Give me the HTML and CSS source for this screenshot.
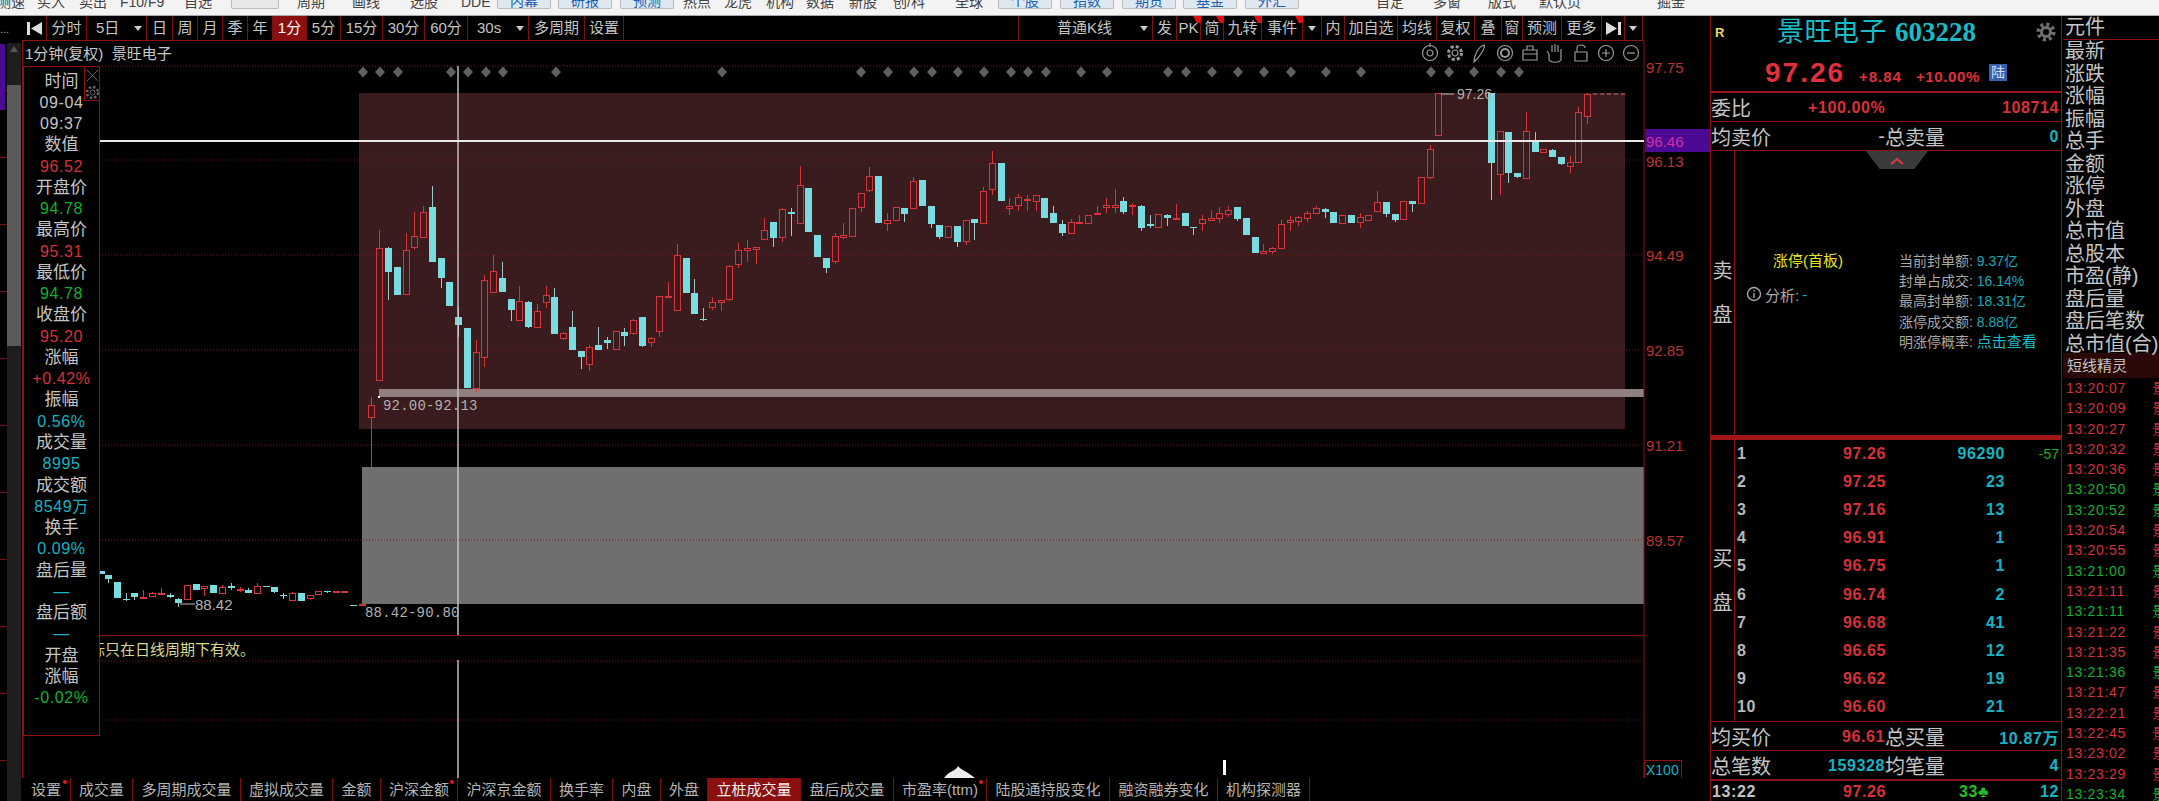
FILE: index.html
```html
<!DOCTYPE html>
<html lang="zh-CN">
<head>
  <meta charset="UTF-8">
  <title>景旺电子 603228</title>
  <link rel="stylesheet" href="styles.css">
</head>
<body>

  <!-- 顶部菜单 (被窗口裁切) -->
  <div class="menu-bar">
    <div class="menu-grid">
      <span>测速</span><span>买入</span><span>卖出</span><span>F10/F9</span><span>自选</span>
      <span class="menu-btn blank"></span>
      <span>周期</span><span>画线</span><span>选股</span><span>DDE</span>
      <span class="menu-btn">内幕</span><span class="menu-btn">研报</span><span class="menu-btn">预测</span>
      <span>热点</span><span>龙虎</span><span>机构</span><span>数据</span><span>新股</span><span>创/科</span><span>全球</span>
      <span class="menu-btn">个股</span><span class="menu-btn">指数</span><span class="menu-btn">期货</span><span class="menu-btn">基金</span><span class="menu-btn">外汇</span>
      <span>自定</span><span>多窗</span><span>版式</span><span>默认页</span><span>掘金</span>
    </div>
  </div>

  <div class="main">
    <div class="left-strip">
      <div class="strip-marks"><b>...</b><i></i></div>
      <div class="scrollbar"><u></u><s></s></div>
    </div>

    <div class="chart-col">
      <div class="period-bar">
        <span class="jump">
          <svg width="17" height="15" viewBox="0 0 17 15"><rect x="1" y="1" width="3" height="13"/><path d="M16 1V14L5 7.5Z"/></svg>
        </span>
        <span>分时</span>
        <span class="drop">5日</span>
        <span>日</span><span>周</span><span>月</span><span>季</span><span>年</span>
        <span class="on">1分</span>
        <span>5分</span><span>15分</span><span>30分</span><span>60分</span>
        <span class="drop">30s</span>
        <span>多周期</span><span>设置</span>
        <span class="gap"></span>
        <span class="drop k-type">普通K线</span>
        <span>发</span><span class="mark">PK</span><span class="mark">简</span><span class="mark">九转</span><span class="mark">事件</span>
        <span class="drop only"></span>
        <span>内</span><span>加自选</span><span>均线</span><span>复权</span><span>叠</span><span>窗</span><span>预测</span><span>更多</span>
        <span class="jump">
          <svg width="17" height="15" viewBox="0 0 17 15"><path d="M1 1V14L12 7.5Z"/><rect x="13" y="1" width="3" height="13"/></svg>
        </span>
        <span class="drop only"></span>
      </div>

      <div class="chart-wrap">
        <!-- 画布坐标就是页面坐标 -->
        <svg class="chart" width="1688" height="737" viewBox="22 41 1688 737">
          <rect x="359" y="93" width="1266" height="336" fill="#3b1c1e"/>
          <rect x="362" y="467" width="1282" height="137" fill="#6f6f6f"/>
          <rect x="379" y="389" width="1265" height="8" fill="#8f7f7f"/>

          <g class="grid">
            <line x1="99" x2="1644" y1="66" y2="66"/>
            <line x1="99" x2="1644" y1="160" y2="160"/>
            <line x1="99" x2="1644" y1="255" y2="255"/>
            <line x1="99" x2="1644" y1="350" y2="350"/>
            <line x1="99" x2="1644" y1="445" y2="445"/>
            <line x1="99" x2="1644" y1="540" y2="540"/>
            <line x1="99" x2="1644" y1="661" y2="661"/>
            <line x1="99" x2="1644" y1="720" y2="720"/>
          </g>

          <g id="diamonds"></g>
          <g id="candles"></g>

          <g class="frame">
            <line x1="22.5" x2="22.5" y1="41" y2="778" stroke-width="2"/>
            <line x1="1644" x2="1644" y1="41" y2="778"/>
            <line x1="23" x2="1644" y1="635.5" y2="635.5"/>
            <rect x="1644.5" y="760.5" width="37" height="18"/>
          </g>

          <path class="cross" d="M458 66V635M458 660V778"/>
          <line class="cross-h" x1="99" x2="1644" y1="141" y2="141"/>

          <line class="limit-dash" x1="1593" x2="1625" y1="94" y2="94"/>
          <path class="note-line" d="M1441 94H1454M180 604H195"/>
          <rect x="378" y="396" width="2" height="2" fill="#fff"/>
          <text class="note" x="1457" y="94">97.26</text>
          <text class="note big" x="195" y="604">88.42</text>
          <text class="note wide" x="383" y="406">92.00-92.13</text>
          <text class="note wide" x="365" y="613">88.42-90.80</text>

          <rect x="1645" y="129" width="65" height="23" fill="#4c0a94"/>
          <g class="axis">
            <text x="1646" y="67">97.75</text>
            <text x="1646" y="141" class="hover">96.46</text>
            <text x="1646" y="161">96.13</text>
            <text x="1646" y="255">94.49</text>
            <text x="1646" y="350">92.85</text>
            <text x="1646" y="445">91.21</text>
            <text x="1646" y="540">89.57</text>
          </g>
          <text class="scale-x" x="1646" y="770">X100</text>

          <text class="hint" x="90" y="649">标只在日线周期下有效。</text>

          <path d="M944 778C950 770 955 772 958 766C961 770 968 772 975 778Z" fill="#eee"/>
          <rect x="1223" y="760" width="3" height="15" fill="#fff"/>

          <!-- 图上工具图标 -->
          <g class="tools">
            <g transform="translate(1430 53)"><circle r="7.5"/><circle r="3"/><path d="M0-10V-6"/></g>
            <g transform="translate(1455 53)"><circle r="3"/><circle r="6.5" stroke-width="3" stroke-dasharray="3 2.1"/></g>
            <g transform="translate(1479 53)"><path d="M5-8C7-6 1 3-3 7L-5 9C-5 3-1-6 5-8Z"/></g>
            <g transform="translate(1505 53)"><circle r="7.5"/><circle r="4" stroke-width="2"/></g>
            <g transform="translate(1530 53)"><path d="M-7-3H7V7H-7ZM-7 1H7M-3-3V-7H3V-3"/></g>
            <g transform="translate(1555 53)"><path d="M-6 1V7C-4 10 4 10 6 7V-4M3-1V-8M0-1V-9M-3-1V-8M-6 1L-8-2"/></g>
            <g transform="translate(1581 53)"><path d="M-6-1H6V8H-6ZM-4-1V-5C-4-9 4-9 4-5"/></g>
            <g transform="translate(1606 53)"><circle r="7.5"/><path d="M-4 0H4M0-4V4"/></g>
            <g transform="translate(1631 53)"><circle r="7.5"/><path d="M-4 0H4"/></g>
          </g>
        </svg>

        <div class="chart-title">1分钟(复权)&nbsp;&nbsp;景旺电子</div>

        <div class="data-window">
          <div class="dw-tools">
            <svg width="15" height="17" viewBox="0 0 15 17"><path d="M2 3L13 14M13 3L2 14"/></svg>
            <svg width="15" height="17" viewBox="0 0 15 17"><circle cx="7.5" cy="8.5" r="2.5"/><circle cx="7.5" cy="8.5" r="5.5" stroke-width="2.4" stroke-dasharray="2.5 1.8"/></svg>
          </div>
          <div>时间</div>
          <div class="num">09-04</div>
          <div class="num">09:37</div>
          <div>数值</div>
          <div class="num red">96.52</div>
          <div>开盘价</div>
          <div class="num green">94.78</div>
          <div>最高价</div>
          <div class="num red">95.31</div>
          <div>最低价</div>
          <div class="num green">94.78</div>
          <div>收盘价</div>
          <div class="num red">95.20</div>
          <div>涨幅</div>
          <div class="num red">+0.42%</div>
          <div>振幅</div>
          <div class="num cyan">0.56%</div>
          <div>成交量</div>
          <div class="num cyan">8995</div>
          <div>成交额</div>
          <div class="num cyan">8549万</div>
          <div>换手</div>
          <div class="num cyan">0.09%</div>
          <div>盘后量</div>
          <div class="num cyan">—</div>
          <div>盘后额</div>
          <div class="num cyan">—</div>
          <div>开盘</div>
          <div>涨幅</div>
          <div class="num green">-0.02%</div>
        </div>
      </div>

      <div class="index-tabs">
        <span class="dot">设置</span><span>成交量</span><span>多周期成交量</span><span>虚拟成交量</span><span>金额</span>
        <span class="dot">沪深金额</span><span>沪深京金额</span><span>换手率</span><span>内盘</span><span>外盘</span>
        <span class="on">立桩成交量</span><span>盘后成交量</span><span class="dot">市盈率(ttm)</span>
        <span>陆股通持股变化</span><span>融资融券变化</span><span>机构探测器</span>
      </div>
    </div>

    <div class="quote-panel">
      <div class="quote-head">
        <div class="name-row">
          <span class="r-tag">R</span>
          <span class="stock-name">景旺电子 <em>603228</em></span>
          <svg class="gear" width="20" height="20" viewBox="0 0 20 20"><circle cx="10" cy="10" r="7.5" stroke-width="4" stroke-dasharray="3 2.9"/><circle cx="10" cy="10" r="4.5" stroke-width="3"/></svg>
        </div>
        <div class="price-row">
          <span class="last-price">97.26</span>
          <span class="change">+8.84</span>
          <span class="change pct">+10.00%</span>
          <span class="lu">陆</span>
        </div>
      </div>

      <div class="stat-row">
        <span>委比</span><span class="v red pad">+100.00%</span><span></span><span class="v red right">108714</span>
      </div>
      <div class="stat-row">
        <span>均卖价</span><span class="right">-</span><span>总卖量</span><span class="v cyan right">0</span>
      </div>

      <div class="book sell">
        <div class="side-name"><span>卖</span><span>盘</span></div>
        <div class="sell-body">
          <div class="fold">
            <svg width="16" height="8" viewBox="0 0 16 8"><path d="M2 7L8 2L14 7"/></svg>
          </div>
          <div class="limit-left">
            <div class="limit-title">涨停(首板)</div>
            <div class="limit-note">
              <svg width="16" height="16" viewBox="0 0 16 16"><circle cx="8" cy="8" r="6.5"/><path d="M8 4V5.5M8 7V12"/></svg>
              分析:<span class="cyan">-</span>
            </div>
          </div>
          <div class="limit-list">
            <div>当前封单额: <span>9.37亿</span></div>
            <div>封单占成交: <span>16.14%</span></div>
            <div>最高封单额: <span>18.31亿</span></div>
            <div>涨停成交额: <span>8.88亿</span></div>
            <div>明涨停概率: <span class="link">点击查看</span></div>
          </div>
        </div>
      </div>

      <div class="book buy">
        <div class="side-name"><span>买</span><span>盘</span></div>
        <div class="bid-list">
          <div class="bid"><b>1</b><span class="red">97.26</span><span class="cyan">96290</span><i>-57</i></div>
          <div class="bid"><b>2</b><span class="red">97.25</span><span class="cyan">23</span></div>
          <div class="bid"><b>3</b><span class="red">97.16</span><span class="cyan">13</span></div>
          <div class="bid"><b>4</b><span class="red">96.91</span><span class="cyan">1</span></div>
          <div class="bid"><b>5</b><span class="red">96.75</span><span class="cyan">1</span></div>
          <div class="bid"><b>6</b><span class="red">96.74</span><span class="cyan">2</span></div>
          <div class="bid"><b>7</b><span class="red">96.68</span><span class="cyan">41</span></div>
          <div class="bid"><b>8</b><span class="red">96.65</span><span class="cyan">12</span></div>
          <div class="bid"><b>9</b><span class="red">96.62</span><span class="cyan">19</span></div>
          <div class="bid"><b>10</b><span class="red">96.60</span><span class="cyan">21</span></div>
        </div>
      </div>

      <div class="stat-row line-top">
        <span>均买价</span><span class="v red right">96.61</span><span>总买量</span><span class="v cyan right">10.87万</span>
      </div>
      <div class="stat-row">
        <span>总笔数</span><span class="v cyan right">159328</span><span>均笔量</span><span class="v cyan right">4</span>
      </div>
      <div class="last-trade">
        <span>13:22</span><span class="red">97.26</span><span class="lime">33♣</span><span class="cyan right">12</span>
      </div>
    </div>

    <div class="side-list">
      <div class="side-head">元件</div>
      <div class="side-rows">
        <div>最新</div><div>涨跌</div><div>涨幅</div><div>振幅</div><div>总手</div><div>金额</div><div>涨停</div>
        <div>外盘</div><div>总市值</div><div>总股本</div><div>市盈(静)</div><div>盘后量</div><div>盘后笔数</div><div>总市值(合)</div>
      </div>
      <div class="ticks-head">短线精灵</div>
      <div class="ticks" id="ticks"></div>
    </div>
  </div>

  <script src="chart.js"></script>
</body>
</html>
```

FILE: styles.css
```css
* { margin: 0; padding: 0; box-sizing: border-box; }
html, body { width: 2159px; height: 801px; overflow: hidden; }
body { background: #000; color: #c4c4c4; font-family: "Liberation Sans", "Noto Sans CJK SC", sans-serif; font-size: 15px; }

.red { color: #d8303a; }
.green { color: #12b032; }
.lime { color: #20c020; }
.cyan { color: #14b4c4; }
.right { text-align: right; }

/* 顶部菜单 */
.menu-bar { height: 16px; overflow: hidden; background: #f3f3f3; border-bottom: 1px solid #a8a8a8; }
.menu-grid { display: grid; grid-template-columns: 40px 42px 41px 64px 47px 66px 55px 58px 51px 36px 61px 62px 63px 41px 42px 40px 43px 44px 62px 43px 62px 62px 61px 62px 131px 57px 55px 51px 118px 60px; margin: -5px 0 0 -3px; height: 15px; line-height: 14px; font-size: 14px; color: #444; white-space: nowrap; }
.menu-btn { width: 54px; height: 14px; background: #dfe8f0; border: 1px solid #bbb; border-top: 0; border-radius: 2px; color: #1a5fb4; text-align: center; line-height: 13px; }
.menu-btn.blank { width: 48px; background: #e8e8e8; }

.main { display: flex; height: 785px; }

/* 最左滚动条 */
.left-strip { width: 22px; display: flex; flex: none; }
.strip-marks { width: 7px; position: relative; background: repeating-linear-gradient(to bottom, #000 0, #000 66px, #7a1010 66px, #7a1010 67px) 0 8px; }
.strip-marks b { position: absolute; left: 0; top: 8px; font-weight: normal; font-size: 11px; line-height: 10px; color: #aaa; }
.strip-marks i { position: absolute; left: 0; top: 28px; width: 5px; height: 66px; background: #4c0a94; }
.scrollbar { width: 14px; margin-top: 27px; background: #1e1e1e; position: relative; }
.scrollbar u { position: absolute; top: 3px; left: 3px; border: 4px solid transparent; border-top: 0; border-bottom: 6px solid #555; }
.scrollbar s { position: absolute; top: 42px; left: 0; width: 100%; height: 261px; background: #5a5a5a; }

.chart-col { width: 1688px; flex: none; display: flex; flex-direction: column; }

/* 周期工具条 */
.period-bar { width: 1622px; height: 25px; display: grid; grid-template-columns: 25px 40px 60px 26px 25px 25px 25px 25px 34px 34px 42px 42px 43px 61px 56px 39px 395px 134px 24px 24px 23px 38px 41px 19px 23px 53px 39px 38px 27px 21px 39px 40px 23px 18px; border-bottom: 1px solid #8e1212; line-height: 24px; white-space: nowrap; }
.period-bar span { position: relative; border-right: 1px solid #7a1010; text-align: center; overflow: hidden; }
.period-bar span.on { background: #8a0f0f; color: #fff; }
.period-bar .jump { display: flex; align-items: center; justify-content: center; }
.jump svg { fill: #ddd; }
.period-bar .drop { text-align: left; padding-left: 9px; }
.drop::after { content: ""; position: absolute; right: 4px; top: 10px; border: 4px solid transparent; border-bottom: 0; border-top: 5px solid #ccc; }
.period-bar .k-type { padding-left: 38px; }
.drop.only::after { right: 5px; }
.period-bar .mark { overflow: visible; }
.mark::after { content: ""; position: absolute; right: -1px; top: 0; border: 4px solid transparent; border-top: 7px solid #e01010; border-right-color: #e01010; border-bottom: 0; }

/* K线画布 */
.chart-wrap { position: relative; width: 1688px; height: 737px; }
.chart { position: absolute; left: 0; top: 0; display: block; }
.grid line { stroke: #7c1616; stroke-dasharray: 1 2; }
.frame line, .frame rect { stroke: #8e1212; fill: none; }
.cross { stroke: #c8c8c8; stroke-width: 1.4; fill: none; }
.cross-h { stroke: #e8e8e8; stroke-width: 2; }
.limit-dash { stroke: #a85050; stroke-dasharray: 4 3; stroke-width: 1.5; }
.note-line { stroke: #bbb; fill: none; }
.note { fill: #b4b0b0; font-size: 14px; dominant-baseline: central; }
.note.big { font-size: 15px; }
.note.wide { font-size: 14px; font-family: "Liberation Mono", monospace; letter-spacing: .2px; }
.axis text { fill: #b83434; font-size: 15px; dominant-baseline: central; }
.axis .hover { fill: #d22ea8; }
.scale-x { fill: #14b4c4; font-size: 14px; dominant-baseline: central; }
.hint { fill: #d8d890; font-size: 15px; dominant-baseline: central; }
.tools { fill: none; stroke: #9a9a9a; stroke-width: 1.2; }

.chart-title { position: absolute; left: 3px; top: 3px; line-height: 20px; color: #c8c8c8; white-space: nowrap; }

/* 十字光标数据窗 */
.data-window { position: absolute; left: 1px; top: 25px; width: 77px; height: 670px; padding-top: 3.5px; background: #000; border: 1px solid #8e1212; text-align: center; font-size: 17px; }
.data-window > div { height: 21.28px; line-height: 21px; white-space: nowrap; }
.data-window .num { font-size: 16px; letter-spacing: .6px; }
.data-window > .dw-tools { position: absolute; right: -1px; top: -1px; width: 16px; height: 35px; border: 1px solid #8e1212; }
.dw-tools svg { display: block; fill: none; stroke: #666; stroke-width: 1; }

/* 指标标签 */
.index-tabs { width: 1622px; height: 23px; display: grid; grid-template-columns: 49px 62px 108px 92px 48px 77px 93px 62px 48px 47px 93px 93px 93px 123px 108px 92px; line-height: 24px; color: #b4b4b4; white-space: nowrap; }
.index-tabs span { position: relative; text-align: center; border-right: 1px solid #7a1010; }
.index-tabs .on { background: #8a0f0f; color: #eee; }
.dot::after { content: ""; position: absolute; right: 3px; top: 2px; width: 4px; height: 4px; border-radius: 50%; background: #e01818; }

/* 盘口 */
.quote-panel { width: 352px; flex: none; border-left: 1px solid #8e1212; border-right: 1px solid #8e1212; display: flex; flex-direction: column; }
.quote-head { height: 77px; border-bottom: 2px solid #a01616; }
.name-row { height: 39px; position: relative; padding-left: 66px; }
.r-tag { position: absolute; left: 4px; top: 9px; color: #e6d86a; font-weight: bold; font-size: 13px; }
.stock-name { font-size: 27px; line-height: 33px; color: #18bcc8; letter-spacing: .5px; white-space: nowrap; }
.stock-name em { font-family: "Liberation Serif", serif; font-style: normal; font-weight: bold; font-size: 27px; letter-spacing: 0; }
.gear { position: absolute; right: 5px; top: 6px; fill: none; stroke: #6e6e6e; }
.price-row { height: 36px; display: flex; align-items: center; padding-left: 54px; color: #e0303c; }
.last-price { font-size: 28px; font-weight: bold; letter-spacing: 2px; width: 94px; }
.change { font-size: 15px; font-weight: bold; letter-spacing: 1px; padding-top: 6px; width: 57px; }
.change.pct { width: 73px; letter-spacing: .6px; }
.lu { width: 18px; height: 17px; margin-bottom: 2px; background: #3a5fb0; color: #cfe0f4; font-size: 14px; line-height: 17px; text-align: center; }

.stat-row { height: 29px; flex: none; display: grid; grid-template-columns: 70px 104px 60px 1fr; align-items: center; padding-right: 2px; border-bottom: 1px solid #8e1212; font-size: 20px; white-space: nowrap; }
.stat-row .v { font-size: 16px; font-weight: bold; letter-spacing: .6px; }
.stat-row .pad { padding-left: 27px; }
.stat-row.line-top { border-top: 1px solid #8e1212; height: 30px; }

.book { display: flex; }
.book.sell { border-bottom: 5px solid #a01616; height: 289px; flex: none; }
.book.buy { height: 281px; flex: none; }
.side-name { width: 24px; flex: none; border-right: 1px solid #8e1212; display: flex; flex-direction: column; justify-content: center; align-items: center; gap: 18px; font-size: 20px; line-height: 26px; }

.sell-body { flex: 1; display: flex; position: relative; padding-top: 100px; }
.fold { position: absolute; left: 131px; top: 0; width: 62px; height: 18px; background: #3a3a3a; clip-path: polygon(0 0, 100% 0, 78% 100%, 22% 100%); text-align: center; }
.fold svg { display: block; margin: 6px auto 0; fill: none; stroke: #d84040; stroke-width: 2; }
.limit-left { width: 164px; padding-left: 11px; }
.limit-title { height: 20px; line-height: 20px; margin-left: 27px; color: #e4e41c; }
.limit-note { display: flex; align-items: center; gap: 3px; margin-top: 13px; height: 20px; color: #aaa; font-size: 15px; }
.limit-note svg { fill: none; stroke: #aaa; stroke-width: 1.4; }
.limit-list { font-size: 14px; color: #a8a8a8; white-space: nowrap; }
.limit-list div { height: 20.2px; line-height: 20px; }
.limit-list span { color: #14a8b8; }
.limit-list .link { font-size: 15px; color: #18bcc8; }

.bid-list { flex: 1; }
.bid { height: 28.1px; display: grid; grid-template-columns: 106px 60px 102px 1fr; align-items: center; padding: 0 2px; font-weight: bold; font-size: 16px; letter-spacing: .6px; }
.bid b { color: #b8b8b8; }
.bid span:last-of-type { text-align: right; }
.bid span:first-of-type { text-align: left; }
.bid i { font-style: normal; font-weight: normal; color: #20b020; font-size: 14px; text-align: right; letter-spacing: 0; }

.last-trade { flex: 1; display: grid; grid-template-columns: 131px 116px 1fr 40px; align-items: center; padding: 2px 2px 0 1px; border-top: 1px solid #8e1212; font-size: 16px; font-weight: bold; letter-spacing: .6px; overflow: hidden; }

/* 右侧列表 */
.side-list { flex: 1; min-width: 0; overflow: hidden; padding-left: 1px; }
.side-head { height: 24px; border-bottom: 1px solid #8e1212; font-size: 20px; line-height: 23px; padding-left: 2px; }
.side-rows { height: 313px; padding-left: 2px; font-size: 20px; white-space: nowrap; }
.side-rows div { height: 22.5px; line-height: 22px; }
.ticks-head { height: 25px; background: #2a0808; padding-left: 4px; line-height: 25px; }
.ticks { height: 423px; overflow: hidden; }
.tick { height: 20.3px; line-height: 20px; display: flex; justify-content: space-between; font-size: 14px; letter-spacing: .7px; padding-left: 3px; width: 104px; white-space: nowrap; }
```

FILE: chart.js
```js
// 菱形标记的 x 坐标
const DIAMONDS = [363, 380, 398, 451, 468, 486, 503, 556, 722, 861, 888, 914, 932, 958, 984, 1011, 1028, 1046, 1081, 1107, 1168, 1186, 1212, 1238, 1264, 1291, 1326, 1361, 1431, 1449, 1474, 1501, 1519];

// 每根K线: 中心x, 最高, 实体上沿, 实体下沿, 最低, 类型 (r 阳 / c 阴)
// 按三段记录, x0/sx/y0/sy 把记录值换算成页面坐标
const SEGMENTS = [
  { x0: 0, sx: 2.613, y0: 300, sy: 3, rows: [
    [265,813,813,823,823,'c'], [283,824,824,838,850,'c'], [305,846,846,895,895,'c'], [328,880,897,899,903,'c'],
    [351,878,878,892,900,'c'], [374,870,892,894,895,'r'], [397,875,880,889,889,'r'], [420,865,880,883,883,'r'],
    [443,880,885,890,895,'c'], [466,893,897,908,920,'c'], [489,855,855,897,897,'r'], [512,851,851,871,871,'c'],
    [534,857,857,863,888,'r'], [557,855,855,878,878,'c'], [580,855,860,878,878,'r'], [603,850,857,864,870,'c'],
    [626,860,867,870,875,'r'], [649,865,870,879,879,'c'], [671,848,858,878,878,'r'], [694,858,858,860,860,'c'],
    [717,862,862,875,880,'c'], [740,880,884,889,897,'c'], [763,875,880,899,899,'r'], [786,880,880,902,902,'c'],
    [809,885,885,893,899,'r'], [831,873,873,882,882,'r'], [854,873,873,876,880,'c'], [877,873,873,875,875,'r'],
    [900,873,873,875,875,'r'], [923,915,915,917,917,'c'], [946,913,913,915,915,'r']
  ] },
  { x0: 350, sx: 3, y0: 80, sy: 3, rows: [
    [62,950,975,1010,1160,'r'], [88,450,503,900,900,'r'], [114,500,503,575,660,'c'], [140,560,562,646,646,'c'],
    [167,458,510,642,642,'r'], [193,397,468,500,510,'r'], [219,378,397,470,470,'r'], [245,317,380,545,545,'c'],
    [272,535,535,594,625,'c'], [298,605,607,677,677,'c'], [324,680,712,734,770,'c'], [350,745,745,925,925,'c'],
    [377,780,817,923,935,'r'], [403,585,600,832,862,'r'], [429,525,573,636,636,'r'], [456,545,595,636,636,'c'],
    [482,658,658,691,722,'c'], [508,618,664,721,721,'r'], [534,663,665,742,745,'c'], [561,672,693,740,740,'r'],
    [587,618,645,665,685,'r'], [613,625,652,763,763,'c'], [640,755,760,774,780,'r'], [666,692,742,811,811,'c'],
    [692,812,812,830,868,'c'], [718,795,802,851,873,'r'], [745,740,795,811,811,'c'], [771,772,780,790,808,'c'],
    [797,752,754,808,808,'r'], [823,745,756,767,797,'c'], [849,718,720,760,765,'r'], [876,712,712,798,800,'c'],
    [902,770,775,787,802,'r'], [928,648,649,754,772,'r'], [955,605,648,651,651,'r'], [981,493,525,691,691,'r'],
    [1007,533,535,639,639,'c'], [1033,598,640,703,703,'c'], [1060,685,716,720,722,'c'], [1086,652,667,682,690,'r'],
    [1112,660,661,667,692,'r'], [1138,555,558,658,662,'r'], [1165,490,510,553,565,'r'], [1191,480,505,510,547,'r'],
    [1217,502,502,506,552,'r'], [1243,415,450,478,478,'r'], [1270,427,427,474,500,'c'], [1296,385,386,470,485,'r'],
    [1323,385,397,402,468,'c'], [1349,258,315,429,429,'r'], [1375,325,325,455,455,'c'], [1401,464,464,530,530,'c'],
    [1428,535,535,565,580,'c'], [1454,458,468,542,552,'r'], [1480,430,466,470,478,'r']
  ] },
  { x0: 850, sx: 3, y0: 80, sy: 3, rows: [
    [6,385,385,467,467,'r'], [32,340,340,382,395,'r'], [58,262,289,329,335,'r'], [85,288,288,429,429,'c'],
    [111,400,420,430,452,'r'], [137,382,382,419,420,'r'], [163,385,385,403,427,'c'], [190,292,303,384,384,'r'],
    [216,299,299,377,377,'c'], [242,377,377,432,445,'c'], [268,434,434,471,476,'c'], [295,438,438,471,475,'r'],
    [321,438,438,486,500,'c'], [347,420,420,482,495,'r'], [373,418,418,430,480,'c'], [400,322,333,430,430,'r'],
    [426,212,250,327,345,'r'], [452,250,250,362,362,'c'], [478,355,378,384,405,'r'], [505,342,352,376,392,'r'],
    [531,345,358,360,392,'r'], [557,344,344,362,392,'r'], [583,355,355,414,414,'c'], [610,378,400,430,430,'c'],
    [636,420,431,460,468,'c'], [662,418,427,459,459,'r'], [688,405,425,429,429,'r'], [715,405,405,429,429,'r'],
    [741,378,398,403,405,'r'], [767,355,375,380,400,'r'], [794,328,375,382,400,'r'], [820,352,362,397,402,'c'],
    [846,370,374,378,405,'r'], [873,375,377,445,452,'c'], [899,405,432,437,445,'c'], [925,402,403,441,441,'r'],
    [951,403,404,414,437,'c'], [978,373,413,418,420,'r'], [1004,400,400,437,437,'c'], [1030,440,440,444,465,'c'],
    [1056,405,418,430,452,'r'], [1082,390,415,419,420,'r'], [1108,382,400,415,430,'r'], [1135,378,389,403,412,'r'],
    [1161,381,381,418,422,'c'], [1187,415,415,464,464,'c'], [1214,472,472,520,520,'c'], [1240,493,512,519,519,'r'],
    [1266,500,503,513,522,'r'], [1292,420,431,503,503,'r'], [1319,408,420,425,452,'r'], [1345,408,410,423,437,'r'],
    [1371,392,400,415,425,'r'], [1398,378,385,399,399,'r'], [1424,385,386,395,415,'c'], [1450,397,397,430,430,'c'],
    [1476,405,405,429,429,'r'], [1503,404,404,430,430,'c']
  ] },
  { x0: 1300, sx: 3, y0: 70, sy: 3, rows: [
    [179,430,442,456,475,'r'], [205,435,435,451,451,'r'], [231,362,397,424,424,'r'], [258,397,397,432,442,'c'],
    [284,433,433,450,456,'c'], [310,393,393,448,448,'r'], [336,392,393,403,427,'c'], [362,322,322,400,402,'r'],
    [389,225,236,322,328,'r'], [415,70,70,196,196,'r'], [572,70,70,279,390,'c'], [599,183,183,313,375,'r'],
    [625,186,186,309,340,'c'], [651,308,310,322,324,'c'], [678,127,183,324,324,'r'], [704,186,210,245,245,'c'],
    [730,236,236,246,250,'r'], [756,237,240,261,261,'c'], [783,262,262,281,285,'c'], [809,258,277,287,310,'r'],
    [835,110,127,275,275,'r'], [861,70,71,139,162,'r']
  ] }
];

// 短线精灵: 时间, 是否为绿
const TICKS = [
  ['13:20:07',0], ['13:20:09',0], ['13:20:27',0], ['13:20:32',0], ['13:20:36',0], ['13:20:50',1], ['13:20:52',1],
  ['13:20:54',0], ['13:20:55',0], ['13:21:00',1], ['13:21:11',0], ['13:21:11',1], ['13:21:22',0], ['13:21:35',0],
  ['13:21:36',1], ['13:21:47',0], ['13:22:21',0], ['13:22:45',0], ['13:23:02',0], ['13:23:29',0], ['13:23:34',1]
];

const SVG_NS = 'http://www.w3.org/2000/svg';

function el(parent, name, attrs) {
  const e = document.createElementNS(SVG_NS, name);
  Object.keys(attrs).forEach(k => e.setAttribute(k, attrs[k]));
  parent.appendChild(e);
  return e;
}

const diamonds = document.getElementById('diamonds');
DIAMONDS.forEach(x => {
  el(diamonds, 'path', { d: `M${x} 66.5L${x + 5} 72L${x} 77.5L${x - 5} 72Z`, fill: '#606060' });
});

const candles = document.getElementById('candles');
SEGMENTS.forEach(seg => {
  seg.rows.forEach(r => {
    const x = Math.round(seg.x0 + r[0] / seg.sx) + 0.5;
    const [hi, top, bot, lo] = r.slice(1, 5).map(v => Math.round(seg.y0 + v / seg.sy));
    const isRed = r[5] === 'r';
    const wick = isRed ? '#d8343c' : '#9cc8c8';
    if (top > hi) el(candles, 'line', { x1: x, x2: x, y1: hi, y2: top, stroke: wick });
    if (lo > bot) el(candles, 'line', { x1: x, x2: x, y1: bot, y2: lo, stroke: wick });
    if (isRed) {
      el(candles, 'rect', { x: x - 3, y: top + 0.5, width: 6, height: Math.max(bot - top, 1), fill: 'none', stroke: '#d8343c' });
    } else {
      el(candles, 'rect', { x: x - 3.5, y: top, width: 7, height: Math.max(bot - top, 1), fill: '#78dce0' });
    }
  });
});

const ticks = document.getElementById('ticks');
TICKS.forEach(t => {
  const d = document.createElement('div');
  d.className = 'tick ' + (t[1] ? 'green' : 'red');
  d.innerHTML = `<span>${t[0]}</span><span>景</span>`;
  ticks.appendChild(d);
});
```
